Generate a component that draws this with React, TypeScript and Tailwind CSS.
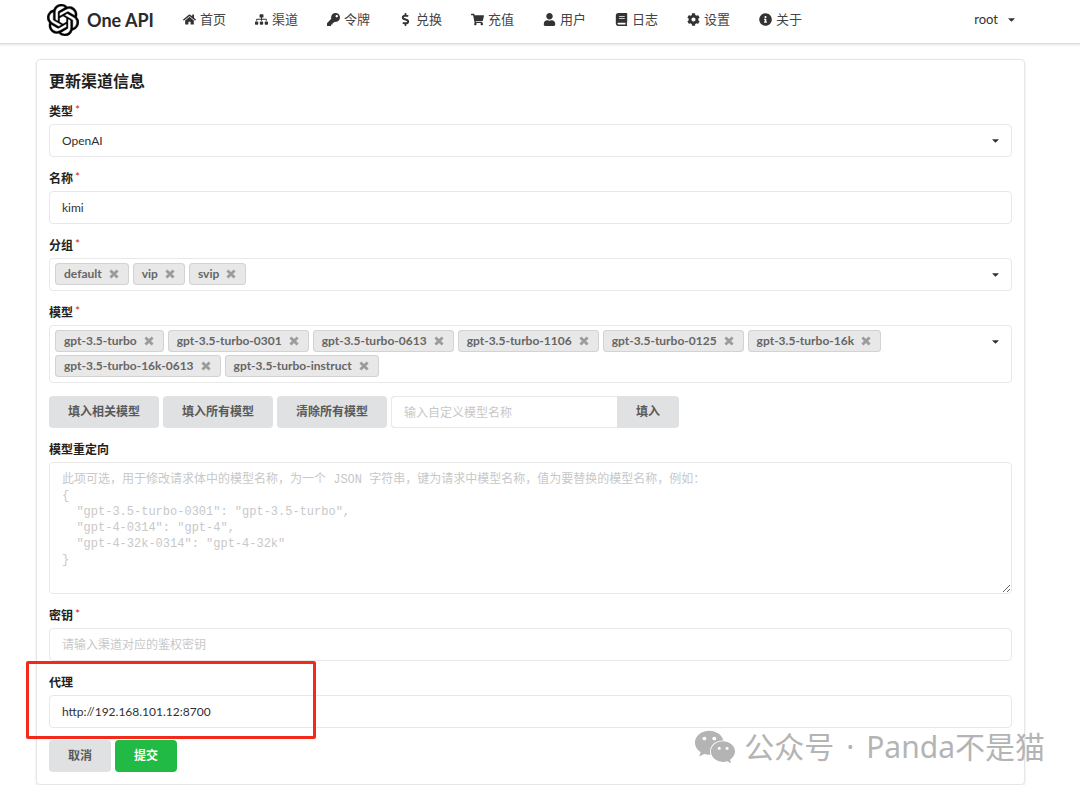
import { useState } from "react"
import type { ReactNode } from "react"
import { FaBook, FaCaretDown, FaCog, FaDollarSign, FaHome, FaInfoCircle, FaKey, FaShoppingCart, FaSitemap, FaUser, FaWeixin } from "react-icons/fa"
import { SiOpenai } from "react-icons/si"

const navItems = [
    { icon: FaHome, text: "首页" },
    { icon: FaSitemap, text: "渠道" },
    { icon: FaKey, text: "令牌" },
    { icon: FaDollarSign, text: "兑换" },
    { icon: FaShoppingCart, text: "充值" },
    { icon: FaUser, text: "用户" },
    { icon: FaBook, text: "日志" },
    { icon: FaCog, text: "设置" },
    { icon: FaInfoCircle, text: "关于" },
]

const allModels = [
    "gpt-3.5-turbo",
    "gpt-3.5-turbo-0301",
    "gpt-3.5-turbo-0613",
    "gpt-3.5-turbo-1106",
    "gpt-3.5-turbo-0125",
    "gpt-3.5-turbo-16k",
    "gpt-3.5-turbo-16k-0613",
    "gpt-3.5-turbo-instruct",
]

const mappingExample = `此项可选，用于修改请求体中的模型名称，为一个 JSON 字符串，键为请求中模型名称，值为要替换的模型名称，例如：
{
  "gpt-3.5-turbo-0301": "gpt-3.5-turbo",
  "gpt-4-0314": "gpt-4",
  "gpt-4-32k-0314": "gpt-4-32k"
}`

const inputStyle = "block w-full h-[33px] rounded border border-[#e8e8e8] bg-white px-3 text-xs text-[#303030] outline-none placeholder:text-[#c8c8c8] focus:border-[#85b7d9]"
const buttonStyle = "h-8 rounded bg-[#e0e1e2] px-[19px] text-xs font-bold text-[#5a5a5a] hover:bg-[#cacbcd]"

const Label = ({ id, text, required }: { id: string; text: string; required?: boolean }) => (
    <label htmlFor={id} className="mb-0.5 flex h-5 items-center text-xs font-bold text-[#212121]">
        {text}
        {required && <span className="ml-[2px] -mt-1 font-normal text-[#db2828]">*</span>}
    </label>
)

const Field = ({ id, text, required, children }: { id: string; text: string; required?: boolean; children: ReactNode }) => (
    <div className="mb-3">
        <Label id={id} text={text} required={required} />
        {children}
    </div>
)

const TagBox = ({ id, tags, onRemove }: { id: string; tags: string[]; onRemove: (tag: string) => void }) => (
    <div className="flex min-h-[33px] items-start rounded border border-[#e8e8e8] pt-1 pr-[10px] pb-[5px] pl-[5px]">
        <div className="flex flex-1 flex-wrap gap-x-1 gap-y-[3px] pr-20">
            {tags.map((tag) => (
                <span key={tag} className="flex h-[22px] items-center gap-[6px] rounded-sm bg-[#e8e8e8] px-[9px] text-xs font-bold text-[#666] inset-ring inset-ring-[#d3d3d4]">
                    {tag}
                    <button type="button" aria-label={tag} onClick={() => onRemove(tag)} className="w-3 text-[#9c9c9c] hover:text-[#555]">
                        <svg viewBox="0 0 12 12" className="size-3" fill="none" stroke="currentColor" strokeWidth="2.8">
                            <path d="M2.4 2.4l7.2 7.2M9.6 2.4l-7.2 7.2" />
                        </svg>
                    </button>
                </span>
            ))}
        </div>
        <button id={id} type="button" className="flex h-[22px] items-center text-[#333]">
            <FaCaretDown className="size-[11px]" />
        </button>
    </div>
)

const Header = () => (
    <header className="border-b border-[#dedede] shadow-[0_1px_2px_rgba(34,36,38,0.12)]">
        <nav className="flex h-[43px] items-center pr-[63px] pl-[47px] pb-1">
            <a href="#" className="flex items-center gap-2 text-lg font-bold text-[#2b2b2b]">
                <SiOpenai className="size-8 stroke-black stroke-[0.3px] text-black" />
                One API
            </a>
            <div className="ml-7 flex items-center gap-7">
                {navItems.map((item) => (
                    <a key={item.text} href="#" className="flex items-center gap-[3px] text-[13px] text-[#444]">
                        <span className="flex w-[15px] justify-center text-[#333]">
                            <item.icon className="h-[13px] w-auto shrink-0" />
                        </span>
                        {item.text}
                    </a>
                ))}
            </div>
            <button type="button" className="ml-auto flex items-center gap-2 text-[13px] text-[#333]">
                root
                <FaCaretDown className="size-[11px]" />
            </button>
        </nav>
    </header>
)

const App = () => {
    const [groups, setGroups] = useState(["default", "vip", "svip"])
    const [models, setModels] = useState(allModels)

    return (
        <div className="bg-white font-[Lato,'Noto_Sans_CJK_SC',sans-serif]">
            <Header />
            <main className="relative mt-[15px] mr-[55px] ml-9 rounded border border-[#e6e6e7] px-3 pt-2 pb-3 shadow-[0_1px_2px_rgba(34,36,38,0.15)]">
                <h1 className="mb-2 text-base leading-[26px] font-bold text-[#212121]">更新渠道信息</h1>
                <form onSubmit={(e) => e.preventDefault()}>
                    <Field id="type" text="类型" required>
                        <div className="relative">
                            <select id="type" className={inputStyle + " appearance-none"}>
                                <option>OpenAI</option>
                            </select>
                            <FaCaretDown className="pointer-events-none absolute top-[11px] right-[11px] size-[11px] text-[#333]" />
                        </div>
                    </Field>
                    <Field id="name" text="名称" required>
                        <input id="name" defaultValue="kimi" className={inputStyle} />
                    </Field>
                    <Field id="groups" text="分组" required>
                        <TagBox id="groups" tags={groups} onRemove={(tag) => setGroups(groups.filter((g) => g !== tag))} />
                    </Field>
                    <Field id="models" text="模型" required>
                        <TagBox id="models" tags={models} onRemove={(tag) => setModels(models.filter((m) => m !== tag))} />
                    </Field>

                    <div className="mb-3 flex gap-1 pt-px">
                        <button type="button" className={buttonStyle}>填入相关模型</button>
                        <button type="button" className={buttonStyle} onClick={() => setModels(allModels)}>填入所有模型</button>
                        <button type="button" className={buttonStyle} onClick={() => setModels([])}>清除所有模型</button>
                        <div className="flex">
                            <input
                                aria-label="输入自定义模型名称"
                                placeholder="输入自定义模型名称"
                                className="h-8 w-[226px] rounded-l border border-r-0 border-[#e8e8e8] px-3 text-xs outline-none placeholder:text-[#c8c8c8]"
                            />
                            <button type="button" className={buttonStyle + " rounded-l-none"}>填入</button>
                        </div>
                    </div>

                    <Field id="mapping" text="模型重定向">
                        <textarea
                            id="mapping"
                            placeholder={mappingExample}
                            className="block h-[132px] w-full resize-y rounded border border-[#e8e8e8] px-3 py-[9px] font-['Liberation_Mono','Noto_Sans_CJK_SC',monospace] text-xs leading-4 outline-none placeholder:text-[#c8c8c8]"
                        />
                    </Field>
                    <Field id="key" text="密钥" required>
                        <input id="key" placeholder="请输入渠道对应的鉴权密钥" className={inputStyle} />
                    </Field>
                    <div className="relative">
                        <Field id="proxy" text="代理">
                            <input id="proxy" defaultValue="http://192.168.101.12:8700" className={inputStyle} />
                        </Field>
                        <div className="pointer-events-none absolute -top-3 -left-[23px] h-[78px] w-[290px] rounded-xs border-3 border-[#f3291c]" />
                    </div>

                    <div className="flex gap-1">
                        <button type="button" className={buttonStyle}>取消</button>
                        <button type="submit" className="h-8 rounded bg-[#21ba45] px-[19px] text-xs font-bold text-white hover:bg-[#16ab39]">提交</button>
                    </div>
                </form>

                <div className="pointer-events-none absolute -right-[21px] bottom-4 flex items-center gap-3 font-['Noto_Sans','Noto_Sans_CJK_SC',sans-serif] text-3xl whitespace-nowrap text-[#b4b4b4]">
                    <span className="flex items-center gap-2">
                        <FaWeixin className="size-[42px]" />
                        公众号
                    </span>
                    <span>·</span>
                    <span>Panda不是猫</span>
                </div>
            </main>
        </div>
    )
}

export default App
